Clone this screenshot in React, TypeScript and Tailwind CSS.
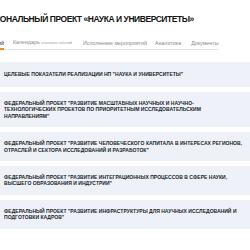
import React from "react";

const cards = [
  'ЦЕЛЕВЫЕ ПОКАЗАТЕЛИ РЕАЛИЗАЦИИ НП "НАУКА И УНИВЕРСИТЕТЫ"',
  'ФЕДЕРАЛЬНЫЙ ПРОЕКТ "РАЗВИТИЕ МАСШТАБНЫХ НАУЧНЫХ И НАУЧНО-ТЕХНОЛОГИЧЕСКИХ ПРОЕКТОВ ПО ПРИОРИТЕТНЫМ ИССЛЕДОВАТЕЛЬСКИМ НАПРАВЛЕНИЯМ"',
  'ФЕДЕРАЛЬНЫЙ ПРОЕКТ "РАЗВИТИЕ ЧЕЛОВЕЧЕСКОГО КАПИТАЛА В ИНТЕРЕСАХ РЕГИОНОВ, ОТРАСЛЕЙ И СЕКТОРА ИССЛЕДОВАНИЙ И РАЗРАБОТОК"',
  'ФЕДЕРАЛЬНЫЙ ПРОЕКТ "РАЗВИТИЕ ИНТЕГРАЦИОННЫХ ПРОЦЕССОВ В СФЕРЕ НАУКИ, ВЫСШЕГО ОБРАЗОВАНИЯ И ИНДУСТРИИ"',
  'ФЕДЕРАЛЬНЫЙ ПРОЕКТ "РАЗВИТИЕ ИНФРАСТРУКТУРЫ ДЛЯ НАУЧНЫХ ИССЛЕДОВАНИЙ И ПОДГОТОВКИ КАДРОВ"',
];

export default function App() {
  return (
    <main className="h-[250px] w-[250px] overflow-hidden bg-white font-['Liberation_Sans',Arial,sans-serif]">
      <h1 className="ml-[-23px] mt-[13px] whitespace-nowrap text-[8.5px] font-bold leading-[12px] tracking-[-0.45px] text-[#141414]">
        НАЦИОНАЛЬНЫЙ ПРОЕКТ «НАУКА И УНИВЕРСИТЕТЫ»
      </h1>

      <nav className="mt-[14px] flex w-[218px] items-end whitespace-nowrap border-b border-[#e3e3e3] text-[5.3px] leading-[7px] text-[#8a8a8a]">
        <div className="-mb-px ml-[-20px] w-[24px] shrink-0 overflow-hidden border-b-2 border-[#f28a1e] pb-[1px] text-right text-[#222]">
          Общий
        </div>
        <div className="ml-[9px] pb-[2px]">
          Календарь <span className="text-[3.5px] text-[#a0a0a0]">ключевых событий</span>
        </div>
        <div className="ml-[11px] pb-[2px]">Исполнение мероприятий</div>
        <div className="ml-[8px] pb-[2px]">Аналитика</div>
        <div className="ml-[10px] pb-[2px]">Документы</div>
      </nav>

      <div className="mt-[12px] flex flex-col gap-[5px]">
        {cards.map((t, i) => (
          <div
            key={i}
            className={
              i === 0
                ? "flex min-h-[25px] w-[262px] items-center bg-[#eef1f8] px-[4px]"
                : "w-[262px] bg-[#eef1f8] px-[4px] py-[8px]"
            }
          >
            <p className="w-[240px] text-[5.05px] font-bold leading-[6.4px] text-[#1b1f2a]">{t}</p>
          </div>
        ))}
      </div>
    </main>
  );
}
